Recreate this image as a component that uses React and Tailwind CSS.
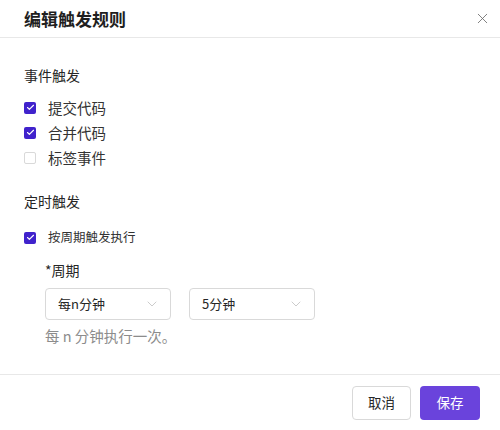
import { X, ChevronDown, Check } from 'lucide-react';

const FONT = { fontFamily: '"Noto Sans CJK SC", "Noto Sans", sans-serif' };

function Box({ checked }) {
  return checked ? (
    <span className="flex h-[12px] w-[12px] items-center justify-center rounded-[2px] bg-[#4022cc]">
      <Check size={9} strokeWidth={3} className="text-white" />
    </span>
  ) : (
    <span className="h-[12px] w-[12px] rounded-[2px] border border-[#d9d9d9] bg-white" />
  );
}

function Option({ checked, label, small }) {
  return (
    <label className="flex h-[25px] items-center">
      <Box checked={checked} />
      <span className={small ? 'ml-[12px] text-[12.5px] text-[#333]' : 'ml-[12px] text-[14.5px] text-[#333]'}>
        {label}
      </span>
    </label>
  );
}

function Select({ value }) {
  return (
    <div className="flex h-[32px] w-[126px] items-center justify-between rounded-[4px] border border-[#d9d9d9] bg-white pl-[12px] pr-[10px]">
      <span className="text-[13px] text-[#262626]">{value}</span>
      <ChevronDown size={16} strokeWidth={1.2} className="text-[#bfbfbf]" />
    </div>
  );
}

export default function App() {
  return (
    <div className="flex h-[430px] w-[500px] flex-col bg-white" style={FONT}>
      {/* header */}
      <div className="flex h-[38px] shrink-0 items-center justify-between border-b border-[#e8e8e8] pl-[24px] pr-[9px]">
        <span className="text-[17px] font-bold text-[#1f1f1f]">编辑触发规则</span>
        <X size={17} strokeWidth={1.2} className="text-[#6b6b6b]" />
      </div>

      {/* body */}
      <div className="flex flex-1 flex-col px-[24px] pt-[26px]">
        <div className="text-[14px] leading-[22px] text-[#262626]">事件触发</div>
        <div className="mt-[9px] flex flex-col">
          <Option checked label="提交代码" />
          <Option checked label="合并代码" />
          <Option label="标签事件" />
        </div>

        <div className="mt-[20px] text-[14px] leading-[22px] text-[#262626]">定时触发</div>
        <div className="mt-[13px]">
          <Option checked small label="按周期触发执行" />
        </div>

        <div className="ml-[21px] mt-[9px] flex flex-col">
          <div className="text-[14px] leading-[22px] text-[#262626]">*周期</div>
          <div className="mt-[7px] flex gap-[18px]">
            <Select value="每n分钟" />
            <Select value="5分钟" />
          </div>
          <div className="mt-[5px] text-[14.5px] leading-[22px] text-[#8c8c8c]">每 n 分钟执行一次。</div>
        </div>
      </div>

      {/* footer */}
      <div className="flex h-[56px] shrink-0 items-center justify-end gap-[9px] border-t border-[#e8e8e8] pr-[20px]">
        <button className="h-[34px] w-[59px] rounded-[4px] border border-[#d9d9d9] bg-white text-[13.5px] text-[#262626]">
          取消
        </button>
        <button className="h-[34px] w-[60px] rounded-[4px] bg-[#6a43dc] text-[13.5px] text-white">
          保存
        </button>
      </div>
    </div>
  );
}
